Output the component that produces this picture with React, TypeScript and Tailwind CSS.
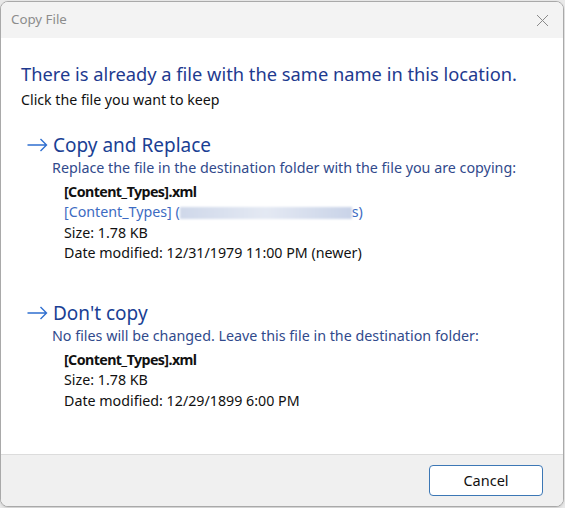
type Option = {
  title: string
  note: string
  name: string
  folder?: string
  size: string
  modified: string
}

const options: Option[] = [
  {
    title: 'Copy and Replace',
    note: 'Replace the file in the destination folder with the file you are copying:',
    name: '[Content_Types].xml',
    folder: '[Content_Types]',
    size: '1.78 KB',
    modified: '12/31/1979 11:00 PM (newer)',
  },
  {
    title: "Don't copy",
    note: 'No files will be changed. Leave this file in the destination folder:',
    name: '[Content_Types].xml',
    size: '1.78 KB',
    modified: '12/29/1899 6:00 PM',
  },
]

function Arrow() {
  return (
    <svg width="21" height="14" viewBox="0 0 21 14" className="stroke-[#2f6fd0] mr-[5px]" fill="none">
      <path d="M0.5 7 H19.5 M13.5 1 L19.5 7 L13.5 13" strokeWidth="1.4" />
    </svg>
  )
}

function CommandLink({ opt }: { opt: Option }) {
  return (
    <div className="pl-[26px]">
      <div className="flex items-center h-[24px] text-[#1a3f94]">
        <Arrow />
        <span className="text-[19px] leading-none">{opt.title}</span>
      </div>
      <div className="pl-[25px] text-[14.3px] leading-[21px] text-[#314a8c]">{opt.note}</div>
      <div className="pl-[37px] pt-[4px] text-[14.25px] leading-[20.3px] text-[#111]">
        <div className="font-bold tracking-[-0.6px]">{opt.name}</div>
        {opt.folder && (
          <div className="text-[#3d6bc2]">
            {opt.folder} (
            <span className="inline-block align-middle w-[172px] h-[12px] bg-gradient-to-r from-[#cfd8ea] via-[#e4e9f3] to-[#c9d3e8] blur-[1px]" />
            s)
          </div>
        )}
        <div>Size: {opt.size}</div>
        <div>Date modified: {opt.modified}</div>
      </div>
    </div>
  )
}

export default function App() {
  return (
    <div className="w-[565px] h-[508px] bg-[#e9e9e9] pt-[1px] font-['Noto_Sans',sans-serif]">
      <div className="w-[564px] h-[506px] border border-[#a9a9a9] rounded-[8px] overflow-hidden flex flex-col bg-white shadow-sm">
        {/* title bar */}
        <div className="h-[36px] bg-[#f3f3f3] flex items-center justify-between pl-[10px] pr-[14px]">
          <span className="text-[13.3px] text-[#8c8c8c]">Copy File</span>
          <svg width="13" height="13" viewBox="0 0 13 13" className="stroke-[#8a8a8a]">
            <path d="M1 1 L12 12 M12 1 L1 12" strokeWidth="1" fill="none" />
          </svg>
        </div>

        {/* body */}
        <div className="flex-1 pt-[23px]">
          <div className="pl-[20px] text-[18.3px] leading-[26px] text-[#1e3a8f]">
            There is already a file with the same name in this location.
          </div>
          <div className="pl-[20px] text-[14.2px] leading-[22px] text-[#111] mt-[2px]">
            Click the file you want to keep
          </div>
          <div className="mt-[22px]">
            <CommandLink opt={options[0]} />
          </div>
          <div className="mt-[38px]">
            <CommandLink opt={options[1]} />
          </div>
        </div>

        {/* footer */}
        <div className="h-[52px] bg-[#f0f0f0] border-t border-[#dcdcdc] flex items-center justify-end pr-[20px]">
          <button className="w-[114px] h-[31px] bg-white border border-[#3c77b5] rounded-[4px] text-[14.5px] text-[#111]">
            Cancel
          </button>
        </div>
      </div>
    </div>
  )
}
